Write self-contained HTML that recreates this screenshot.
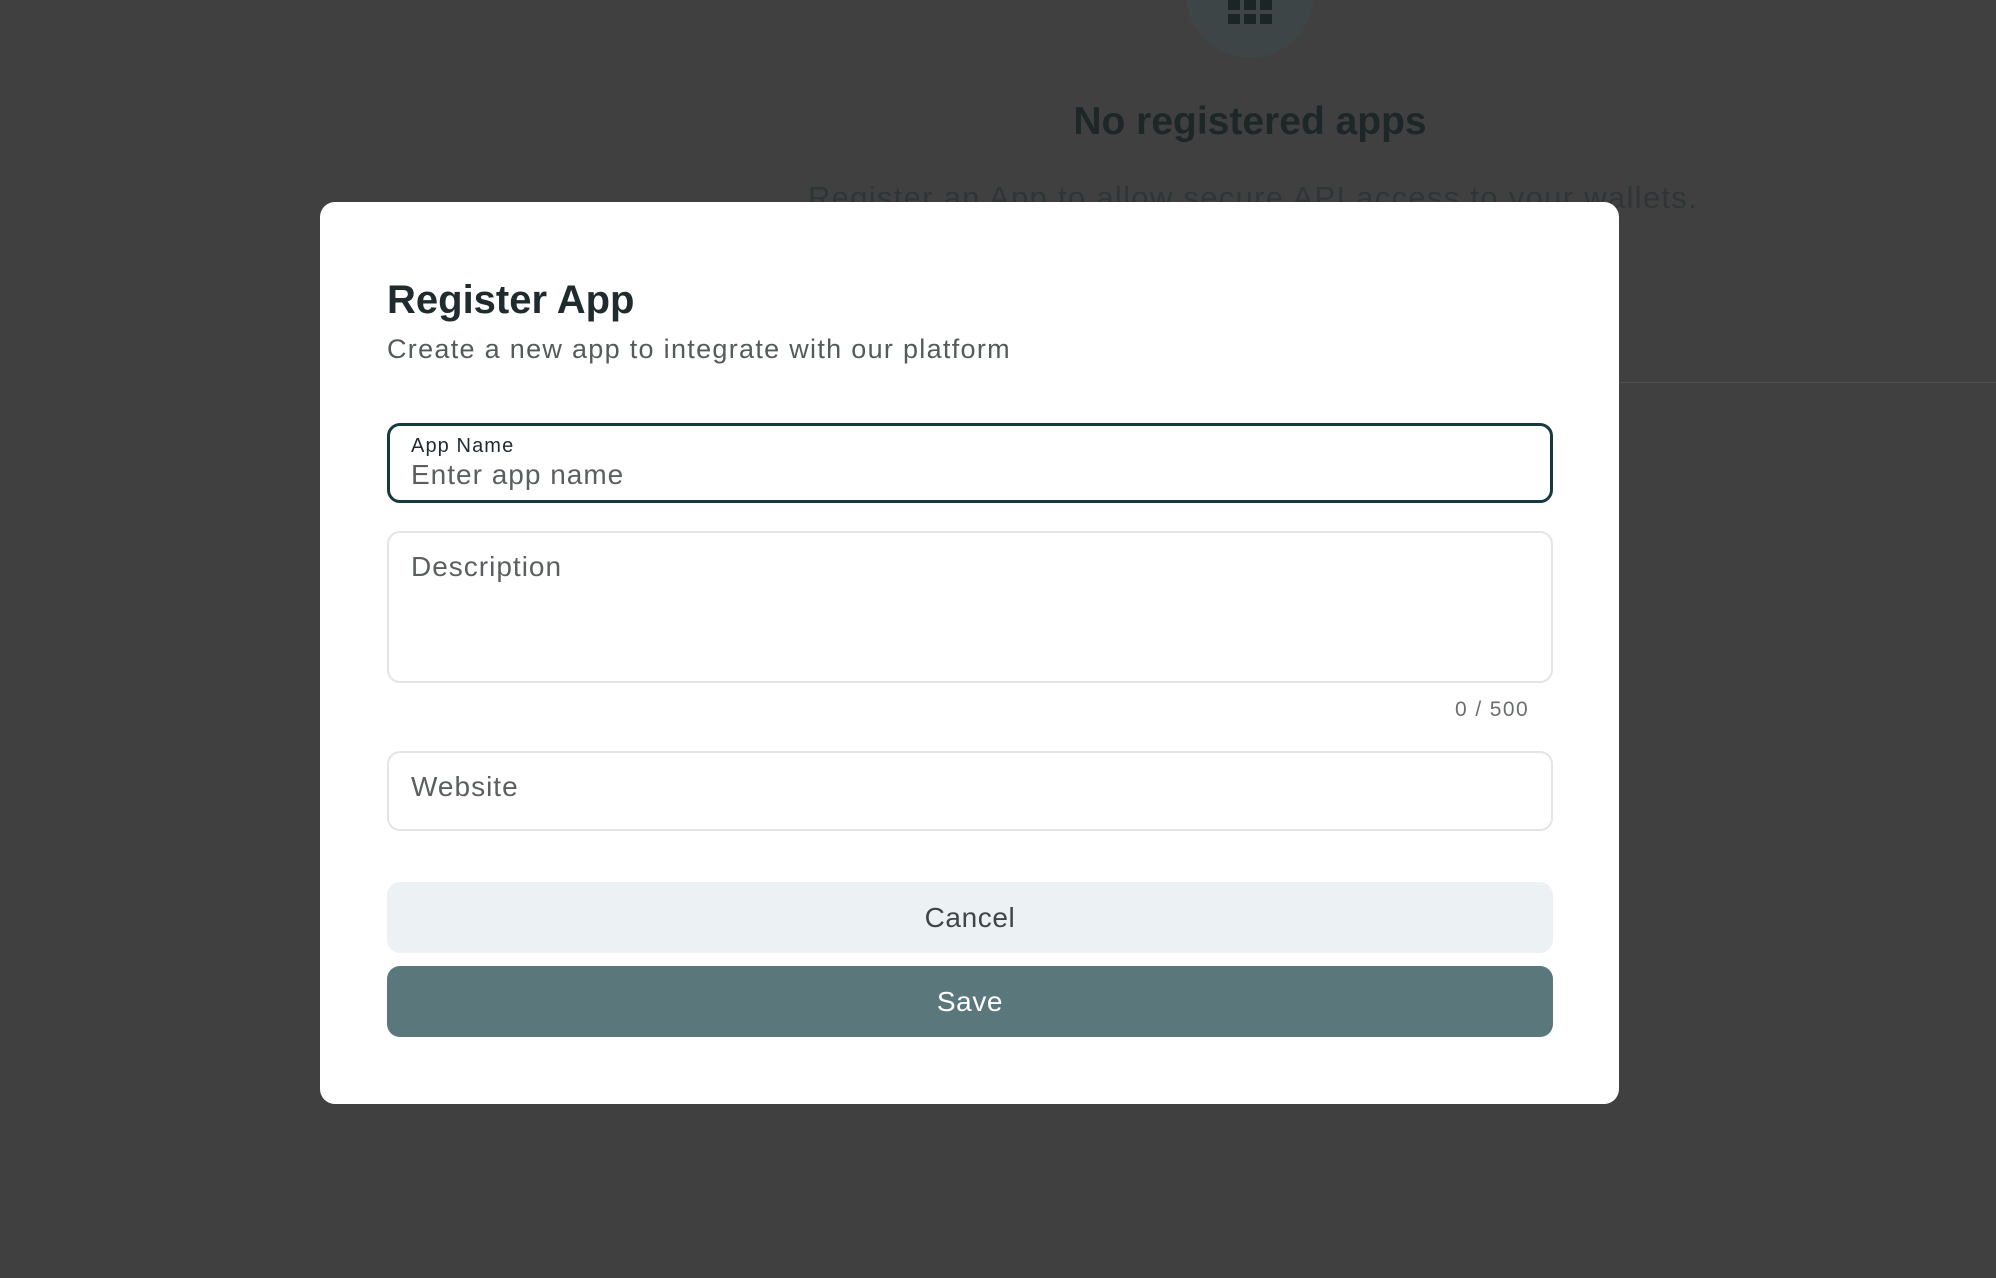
<!DOCTYPE html>
<html><head><meta charset="utf-8"><style>
*{box-sizing:border-box;margin:0;padding:0}
body{width:1996px;height:1278px;background:#404040;font-family:"Liberation Sans",sans-serif;position:relative;overflow:hidden}
.abs{position:absolute}
.circle{left:1186px;top:-70px;width:128px;height:128px;border-radius:50%;background:radial-gradient(circle,#3d4546 0 60%,#3f4444 100%)}
.sq{width:12px;height:10px;background:#1c2526;border-radius:1px}
.hline{left:1619px;top:382px;width:400px;height:1px;background:#4a5050}
.modal{left:320px;top:202px;width:1299px;height:902px;background:#fff;border-radius:15px}
.field{position:absolute;left:67px;width:1166px;border-radius:13px}
.ph{color:#5c5f60;font-size:28px;letter-spacing:1px}
</style></head><body>
<div class="abs circle"></div>
<div class="abs" style="left:1228px;top:0;display:grid;grid-template-columns:12px 12px 12px;gap:4px">
<div class="sq"></div><div class="sq"></div><div class="sq"></div>
<div class="sq"></div><div class="sq"></div><div class="sq"></div></div>
<div class="abs" style="left:0;width:2500px;top:100px;text-align:center;font-size:39px;font-weight:bold;color:#1d2728;">
<span style="position:absolute;left:1250px;transform:translateX(-50%);white-space:nowrap">No registered apps</span></div>
<div class="abs" style="left:808px;top:180px;font-size:31px;letter-spacing:1.3px;color:#2f3536;white-space:nowrap">Register an App to allow secure API access to your wallets.</div>
<div class="abs hline"></div>
<div class="abs modal">
  <div class="abs" style="left:67px;top:76px;font-size:40px;font-weight:bold;color:#1f2b2d">Register App</div>
  <div class="abs" style="left:67px;top:132px;font-size:27px;letter-spacing:1.3px;color:#555a5b">Create a new app to integrate with our platform</div>
  <div class="field" style="top:221px;height:80px;border:3px solid #173a40">
    <div class="abs" style="left:21px;top:9px;font-size:20px;letter-spacing:1.1px;color:#1f2b2d">App Name</div>
    <div class="abs ph" style="left:21px;top:33px">Enter app name</div>
  </div>
  <div class="field" style="top:329px;height:152px;border:2px solid #e3e5e6">
    <div class="abs ph" style="left:22px;top:18px">Description</div>
  </div>
  <div class="abs" style="left:1135px;top:496px;font-size:21px;letter-spacing:1.4px;color:#6b6e6f">0 / 500</div>
  <div class="field" style="top:549px;height:80px;border:2px solid #e3e5e6">
    <div class="abs ph" style="left:22px;top:18px">Website</div>
  </div>
  <div class="field" style="top:680px;height:71px;background:#ecf2f4;text-align:center;line-height:71px;font-size:28px;letter-spacing:0.6px;color:#3f4647">Cancel</div>
  <div class="field" style="top:764px;height:71px;background:#5a777c;text-align:center;line-height:71px;font-size:28px;letter-spacing:0.6px;color:#fff">Save</div>
</div>
</body></html>
